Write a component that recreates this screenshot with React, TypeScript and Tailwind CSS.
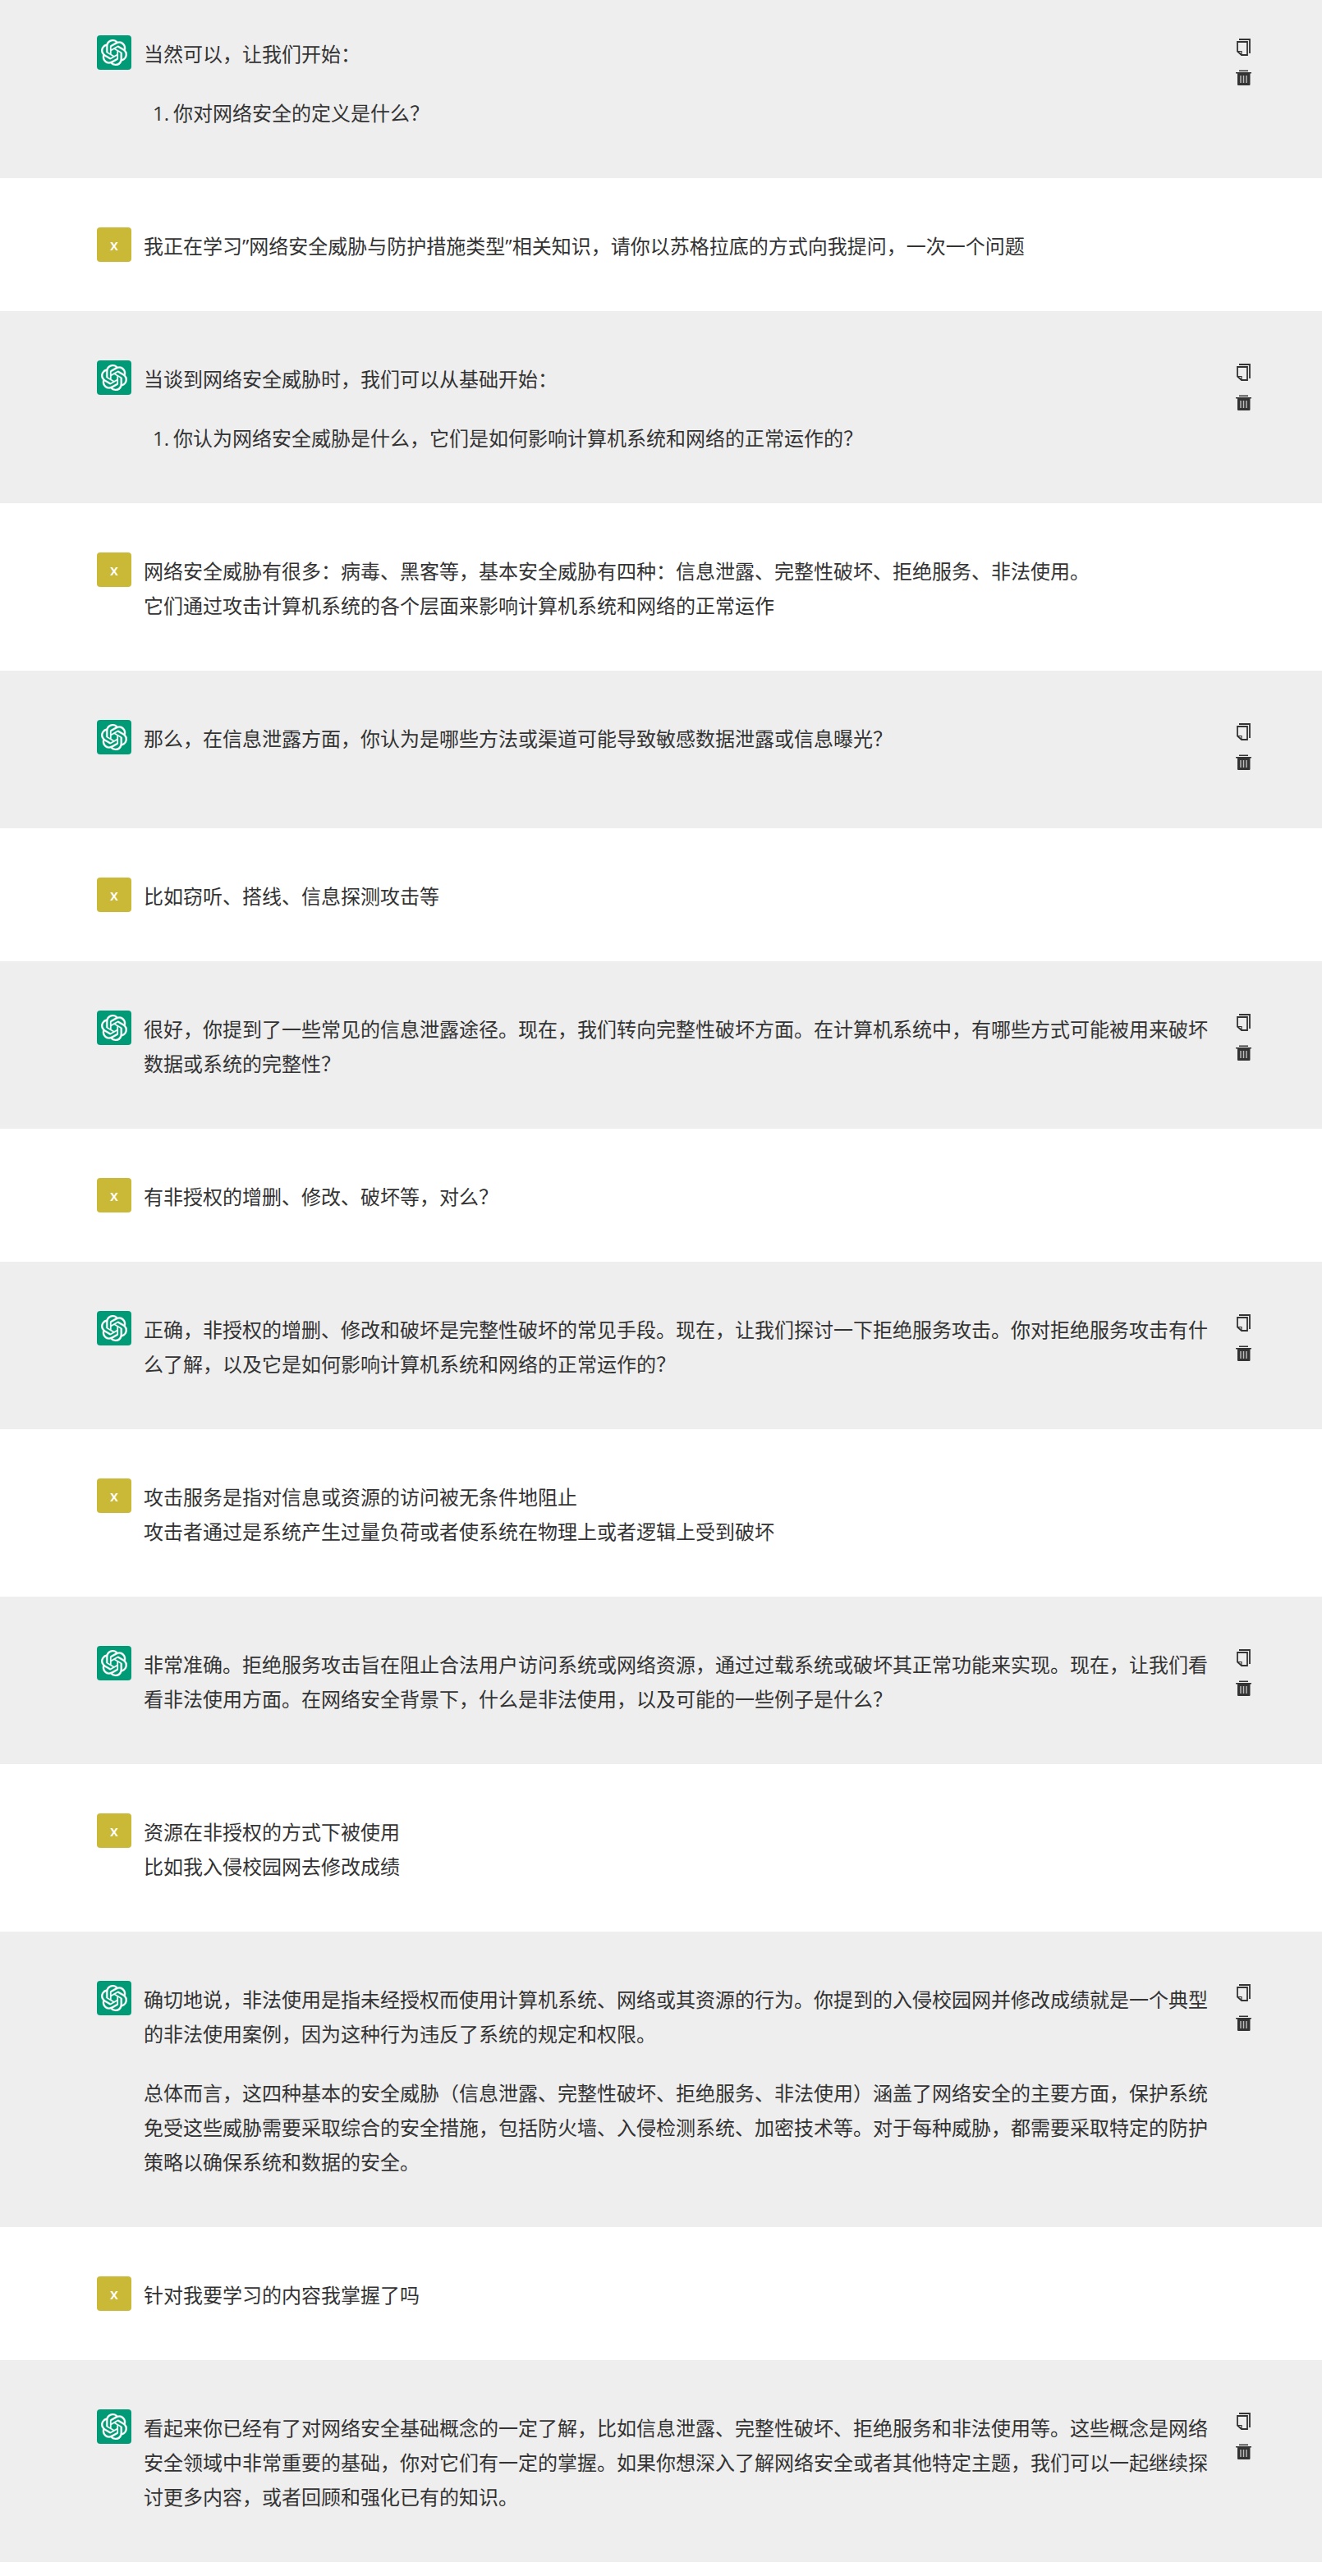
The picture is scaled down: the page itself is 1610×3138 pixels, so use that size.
import type { ReactNode } from 'react'

type Message = {
  role: 'assistant' | 'user'
  body: ReactNode
}

const messages: Message[] = [
  {
    role: 'assistant',
    body: (
      <>
        <p>当然可以，让我们开始：</p>
        <NumberedItem>你对网络安全的定义是什么？</NumberedItem>
      </>
    ),
  },
  { role: 'user', body: <p>我正在学习”网络安全威胁与防护措施类型”相关知识，请你以苏格拉底的方式向我提问，一次一个问题</p> },
  {
    role: 'assistant',
    body: (
      <>
        <p>当谈到网络安全威胁时，我们可以从基础开始：</p>
        <NumberedItem>你认为网络安全威胁是什么，它们是如何影响计算机系统和网络的正常运作的？</NumberedItem>
      </>
    ),
  },
  {
    role: 'user',
    body: (
      <p>
        网络安全威胁有很多：病毒、黑客等，基本安全威胁有四种：信息泄露、完整性破坏、拒绝服务、非法使用。
        <br />
        它们通过攻击计算机系统的各个层面来影响计算机系统和网络的正常运作
      </p>
    ),
  },
  { role: 'assistant', body: <p>那么，在信息泄露方面，你认为是哪些方法或渠道可能导致敏感数据泄露或信息曝光？</p> },
  { role: 'user', body: <p>比如窃听、搭线、信息探测攻击等</p> },
  {
    role: 'assistant',
    body: <p>很好，你提到了一些常见的信息泄露途径。现在，我们转向完整性破坏方面。在计算机系统中，有哪些方式可能被用来破坏数据或系统的完整性？</p>,
  },
  { role: 'user', body: <p>有非授权的增删、修改、破坏等，对么？</p> },
  {
    role: 'assistant',
    body: <p>正确，非授权的增删、修改和破坏是完整性破坏的常见手段。现在，让我们探讨一下拒绝服务攻击。你对拒绝服务攻击有什么了解，以及它是如何影响计算机系统和网络的正常运作的？</p>,
  },
  {
    role: 'user',
    body: (
      <p>
        攻击服务是指对信息或资源的访问被无条件地阻止
        <br />
        攻击者通过是系统产生过量负荷或者使系统在物理上或者逻辑上受到破坏
      </p>
    ),
  },
  {
    role: 'assistant',
    body: <p>非常准确。拒绝服务攻击旨在阻止合法用户访问系统或网络资源，通过过载系统或破坏其正常功能来实现。现在，让我们看看非法使用方面。在网络安全背景下，什么是非法使用，以及可能的一些例子是什么？</p>,
  },
  {
    role: 'user',
    body: (
      <p>
        资源在非授权的方式下被使用
        <br />
        比如我入侵校园网去修改成绩
      </p>
    ),
  },
  {
    role: 'assistant',
    body: (
      <>
        <p>确切地说，非法使用是指未经授权而使用计算机系统、网络或其资源的行为。你提到的入侵校园网并修改成绩就是一个典型的非法使用案例，因为这种行为违反了系统的规定和权限。</p>
        <p>总体而言，这四种基本的安全威胁（信息泄露、完整性破坏、拒绝服务、非法使用）涵盖了网络安全的主要方面，保护系统免受这些威胁需要采取综合的安全措施，包括防火墙、入侵检测系统、加密技术等。对于每种威胁，都需要采取特定的防护策略以确保系统和数据的安全。</p>
      </>
    ),
  },
  { role: 'user', body: <p>针对我要学习的内容我掌握了吗</p> },
  {
    role: 'assistant',
    body: <p>看起来你已经有了对网络安全基础概念的一定了解，比如信息泄露、完整性破坏、拒绝服务和非法使用等。这些概念是网络安全领域中非常重要的基础，你对它们有一定的掌握。如果你想深入了解网络安全或者其他特定主题，我们可以一起继续探讨更多内容，或者回顾和强化已有的知识。</p>,
  },
]

export default function App() {
  return (
    <main className="min-h-[3138px] w-full bg-white font-['Open_Sans','Noto_Sans_CJK_SC',sans-serif] text-2xl leading-[42px] text-[#333]">
      {messages.map((message, index) => (
        <MessageRow first={index === 0} key={index} message={message} />
      ))}
    </main>
  )
}

function MessageRow({ first, message }: { first: boolean, message: Message }) {
  const assistant = message.role === 'assistant'

  return (
    <section className={`flex items-start pb-[58px] pl-[118px] ${first ? 'pt-[43px]' : 'pt-[60px]'} ${assistant ? 'bg-[#eee]' : 'bg-white'}`}>
      {assistant ? <AssistantAvatar /> : <UserAvatar />}
      <div className="ml-[15px] flex w-[1297px] flex-col gap-[30px] pt-0.5" lang="zh-CN">
        {message.body}
      </div>
      {assistant && <MessageActions />}
    </section>
  )
}

function NumberedItem({ children }: { children: ReactNode }) {
  return (
    <ol className="pl-[11px]">
      <li className="flex">
        <span className="w-[25px] shrink-0">1.</span>
        <span>{children}</span>
      </li>
    </ol>
  )
}

function UserAvatar() {
  return (
    <div className="flex size-[42px] shrink-0 items-center justify-center rounded bg-[#cab937] text-lg font-semibold text-white">
      x
    </div>
  )
}

function AssistantAvatar() {
  return (
    <div className="flex size-[42px] shrink-0 items-center justify-center rounded bg-[#009b76] text-white">
      <svg aria-hidden="true" className="size-8" fill="currentColor" stroke="currentColor" strokeWidth="0.2" viewBox="0 0 24 24">
        <path d="M22.2819 9.8211a5.9847 5.9847 0 0 0-.5157-4.9108 6.0462 6.0462 0 0 0-6.5098-2.9A6.0651 6.0651 0 0 0 4.9807 4.1818a5.9847 5.9847 0 0 0-3.9977 2.9 6.0462 6.0462 0 0 0 .7427 7.0966 5.98 5.98 0 0 0 .511 4.9107 6.051 6.051 0 0 0 6.5146 2.9001A5.9847 5.9847 0 0 0 13.2599 24a6.0557 6.0557 0 0 0 5.7718-4.2058 5.9894 5.9894 0 0 0 3.9977-2.9001 6.0557 6.0557 0 0 0-.7475-7.0729zm-9.022 12.6081a4.4755 4.4755 0 0 1-2.8764-1.0408l.1419-.0804 4.7783-2.7582a.7948.7948 0 0 0 .3927-.6813v-6.7369l2.02 1.1686a.071.071 0 0 1 .038.052v5.5826a4.504 4.504 0 0 1-4.4945 4.4944zm-9.6607-4.1254a4.4708 4.4708 0 0 1-.5346-3.0137l.142.0852 4.783 2.7582a.7712.7712 0 0 0 .7806 0l5.8428-3.3685v2.3324a.0804.0804 0 0 1-.0332.0615L9.74 19.9502a4.4992 4.4992 0 0 1-6.1408-1.6464zM2.3408 7.8956a4.485 4.485 0 0 1 2.3655-1.9728V11.6a.7664.7664 0 0 0 .3879.6765l5.8144 3.3543-2.0201 1.1685a.0757.0757 0 0 1-.071 0l-4.8303-2.7865A4.504 4.504 0 0 1 2.3408 7.872zm16.5963 3.8558L13.1038 8.364 15.1192 7.2a.0757.0757 0 0 1 .071 0l4.8303 2.7913a4.4944 4.4944 0 0 1-.6765 8.1042v-5.6772a.79.79 0 0 0-.407-.667zm2.0107-3.0231l-.142-.0852-4.7735-2.7818a.7759.7759 0 0 0-.7854 0L9.409 9.2297V6.8974a.0662.0662 0 0 1 .0284-.0615l4.8303-2.7866a4.4992 4.4992 0 0 1 6.6802 4.66zM8.3065 12.863l-2.02-1.1638a.0804.0804 0 0 1-.038-.0567V6.0742a4.4992 4.4992 0 0 1 7.3757-3.4537l-.142.0805L8.704 5.459a.7948.7948 0 0 0-.3927.6813zm1.0976-2.3654l2.602-1.4998 2.6069 1.4998v2.9994l-2.5974 1.4997-2.6067-1.4997Z" />
      </svg>
    </div>
  )
}

function MessageActions() {
  return (
    <div className="ml-[33px] flex h-[74px] w-[19px] shrink-0 flex-col gap-[17px] pt-1 text-[#333]">
      <svg aria-hidden="true" className="h-[21px] w-[19px] shrink-0" fill="none" stroke="currentColor" viewBox="0 0 19 21">
        <path d="M4 1H17V18" strokeWidth="1.8" />
        <path d="M2 4H14V20H7L2 15.5Z" strokeWidth="1.8" />
        <path d="M2 15.5H7V20" strokeWidth="1.2" />
      </svg>
      <svg aria-hidden="true" className="h-5 w-[19px] shrink-0" fill="currentColor" viewBox="0 0 19 20">
        <path d="M4 0.5H15V2H4Z" />
        <path d="M0 3H19V4.5H17.5V18Q17.5 19 16.5 19H3Q2 19 2 18V4.5H0Z" />
        <path d="M6 7V16M9.5 7V16M13 7V16" stroke="#bbb" strokeWidth="1.5" />
      </svg>
    </div>
  )
}
